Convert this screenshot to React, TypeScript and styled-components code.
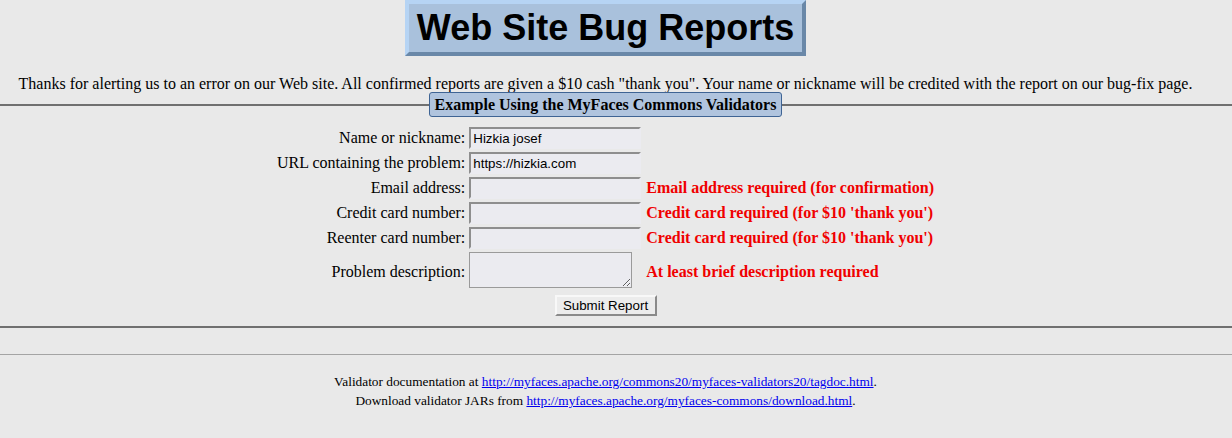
import React from "react";
import styled, { createGlobalStyle } from "styled-components";

const Global = createGlobalStyle`
  html, body { margin: 0; padding: 0; }
  body {
    background: #e9e9e9;
    font-family: "Liberation Serif", "Times New Roman", serif;
    font-size: 16px;
    color: #000;
  }
`;

const Page = styled.div`
  display: flex;
  flex-direction: column;
  align-items: center;
  padding-right: 21px;
`;

const TitleBox = styled.h1`
  margin: 0;
  box-sizing: border-box;
  width: 401px;
  height: 56px;
  border-style: solid;
  border-width: 4px;
  border-color: #b6d4f4 #6a88a8 #6a88a8 #b6d4f4;
  background: #a9c1dc;
  font-family: "Liberation Sans", Arial, sans-serif;
  font-weight: bold;
  font-size: 36px;
  line-height: 48px;
  text-align: center;
`;

const Intro = styled.p`
  margin: 19px 0 0;
  line-height: 18px;
  text-align: center;
`;

const Fieldset = styled.fieldset`
  align-self: stretch;
  margin: -1px -21px 0 0;
  padding: 10px 21px 10px 0;
  border: none;
  border-top: 2px solid #707070;
  border-bottom: 2px solid #707070;
  min-inline-size: 0;
`;

const Legend = styled.legend`
  margin: 0 auto;
  padding: 3px 5px 2px;
  background: #b0c4de;
  border: 1px solid #3f6494;
  border-radius: 3px;
  font-weight: bold;
  font-size: 16px;
  line-height: 18px;
`;

const FormGrid = styled.div`
  display: grid;
  grid-template-columns: auto auto auto;
  justify-content: center;
  column-gap: 4px;
  row-gap: 3px;
  align-items: center;
`;

const Label = styled.label<{ $low?: boolean }>`
  text-align: right;
  line-height: 18px;
  white-space: nowrap;
  padding-top: ${(p) => (p.$low ? "4px" : "0")};
`;

const Field = styled.input`
  box-sizing: border-box;
  width: 172px;
  height: 22px;
  margin: 0;
  padding: 1px 2px 0;
  background: #ebebf0;
  border-style: solid;
  border-width: 2px;
  border-color: #8e8e8e #ebebf0 #ebebf0 #8e8e8e;
  font-family: "Liberation Sans", Arial, sans-serif;
  font-size: 13.33px;
  color: #000;
  outline: none;
`;

const Area = styled.textarea`
  box-sizing: border-box;
  width: 163px;
  height: 36px;
  margin: 0;
  padding: 2px;
  background: #ebebf0;
  border: 1px solid #9a9a9a;
  font-family: "Liberation Sans", Arial, sans-serif;
  font-size: 13.33px;
  display: block;
`;

const Cell = styled.div<{ $low?: boolean }>`
  display: flex;
  align-items: center;
  padding-top: ${(p) => (p.$low ? "4px" : "0")};
`;

const ErrorText = styled.span`
  padding-left: 1px;
  color: #f00000;
  font-weight: bold;
  line-height: 18px;
  white-space: nowrap;
`;

const ButtonRow = styled.div`
  grid-column: 1 / span 3;
  display: flex;
  justify-content: center;
  padding-top: 4px;
`;

const SubmitButton = styled.button`
  box-sizing: border-box;
  width: 102px;
  height: 21px;
  margin: 0;
  padding: 0;
  background: #ececec;
  border-style: solid;
  border-width: 2px;
  border-color: #f8f8f8 #8a8a8a #8a8a8a #f8f8f8;
  font-family: "Liberation Sans", Arial, sans-serif;
  font-size: 13.33px;
  color: #000;
`;

const Rule = styled.hr`
  align-self: stretch;
  margin: 26px -21px 0 0;
  border: none;
  border-top: 1px solid #a4a4a4;
  height: 0;
`;

const Footer = styled.div`
  margin-top: 17px;
  font-size: 13.33px;
  line-height: 19px;
  text-align: center;
`;

const Link = styled.a`
  color: #0000ee;
  text-decoration: underline;
`;

type Row = { label: string; value?: string; error?: string; area?: boolean };

const rows: Row[] = [
  { label: "Name or nickname:", value: "Hizkia josef" },
  { label: "URL containing the problem:", value: "https://hizkia.com" },
  { label: "Email address:", error: "Email address required (for confirmation)" },
  { label: "Credit card number:", error: "Credit card required (for $10 'thank you')" },
  { label: "Reenter card number:", error: "Credit card required (for $10 'thank you')" },
  { label: "Problem description:", error: "At least brief description required", area: true },
];

export default function App() {
  return (
    <>
      <Global />
      <Page>
        <TitleBox>Web Site Bug Reports</TitleBox>
        <Intro>
          Thanks for alerting us to an error on our Web site. All confirmed reports are given a $10 cash "thank you". Your name or nickname will be credited with the report on our bug-fix page.
        </Intro>
        <Fieldset>
          <Legend>Example Using the MyFaces Commons Validators</Legend>
          <FormGrid>
            {rows.map((r) => (
              <React.Fragment key={r.label}>
                <Label $low={r.area}>{r.label}</Label>
                <Cell>
                  {r.area ? <Area /> : <Field defaultValue={r.value ?? ""} />}
                </Cell>
                <Cell $low={r.area}>{r.error && <ErrorText>{r.error}</ErrorText>}</Cell>
              </React.Fragment>
            ))}
            <ButtonRow>
              <SubmitButton>Submit Report</SubmitButton>
            </ButtonRow>
          </FormGrid>
        </Fieldset>
        <Rule />
        <Footer>
          Validator documentation at{" "}
          <Link href="#">http://myfaces.apache.org/commons20/myfaces-validators20/tagdoc.html</Link>.
          <br />
          Download validator JARs from{" "}
          <Link href="#">http://myfaces.apache.org/myfaces-commons/download.html</Link>.
        </Footer>
      </Page>
    </>
  );
}
